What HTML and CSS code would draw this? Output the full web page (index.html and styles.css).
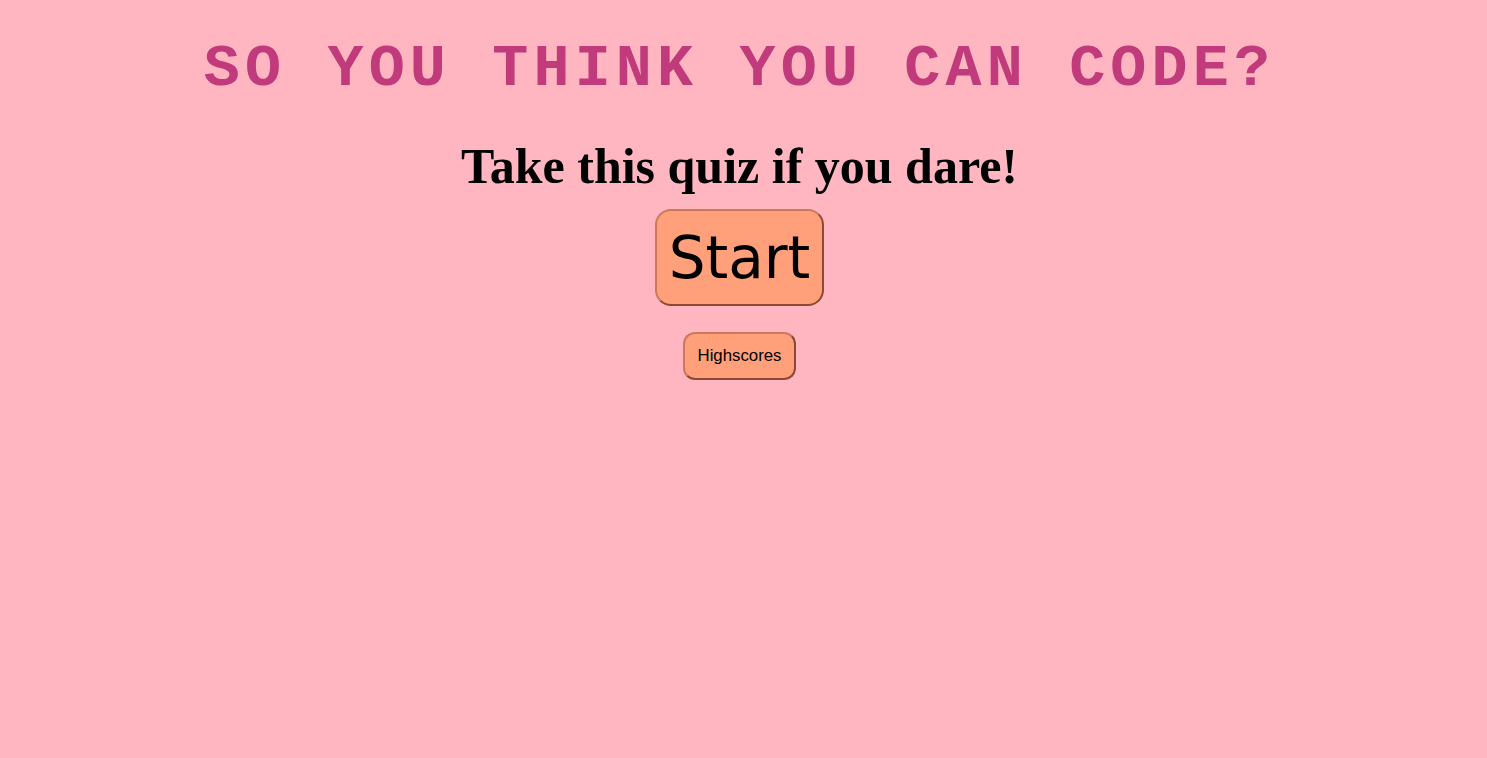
FILE: index.html
```html
<!DOCTYPE html>
<html>
<head>
<meta charset="utf-8">
<title>Quiz</title>
<link rel="stylesheet" href="styles.css">
</head>
<body>
<main class="page">
  <h1 class="title">SO YOU THINK YOU CAN CODE?</h1>
  <h2 class="subtitle">Take this quiz if you dare!</h2>
  <button class="btn btn-start">Start</button>
  <button class="btn btn-scores">Highscores</button>
</main>
</body>
</html>
```

FILE: styles.css
```css
html, body {
  margin: 0;
  padding: 0;
  background: #ffb6c1;
  height: 100%;
}
.page {
  display: flex;
  flex-direction: column;
  align-items: center;
  padding: 0 8px 0 0;
}
.title {
  font-family: "Liberation Mono", "Courier New", monospace;
  font-weight: bold;
  font-size: 60px;
  letter-spacing: 5.2px;
  color: #c03a7c;
  margin: 36px 0 0 0;
  line-height: 1.1;
}
.subtitle {
  font-family: "Liberation Serif", "Times New Roman", serif;
  font-weight: bold;
  font-size: 50px;
  color: #000;
  margin: 37px 0 0 0;
  line-height: 1.1;
}
.btn {
  background: #ffa07a;
  color: #000;
  border-width: 2px;
  border-style: solid;
  border-color: #c97a5c #8a4a33 #8a4a33 #c97a5c;
  cursor: pointer;
}
.btn-start {
  font-family: "DejaVu Sans", Verdana, sans-serif;
  font-size: 58px;
  border-radius: 16px;
  width: 169px;
  height: 97px;
  padding: 0;
  margin-top: 15px;
}
.btn-scores {
  font-family: "Liberation Sans", Arial, sans-serif;
  font-size: 16.8px;
  border-radius: 12px;
  width: 113px;
  height: 48px;
  padding: 0;
  margin-top: 26px;
}
```
